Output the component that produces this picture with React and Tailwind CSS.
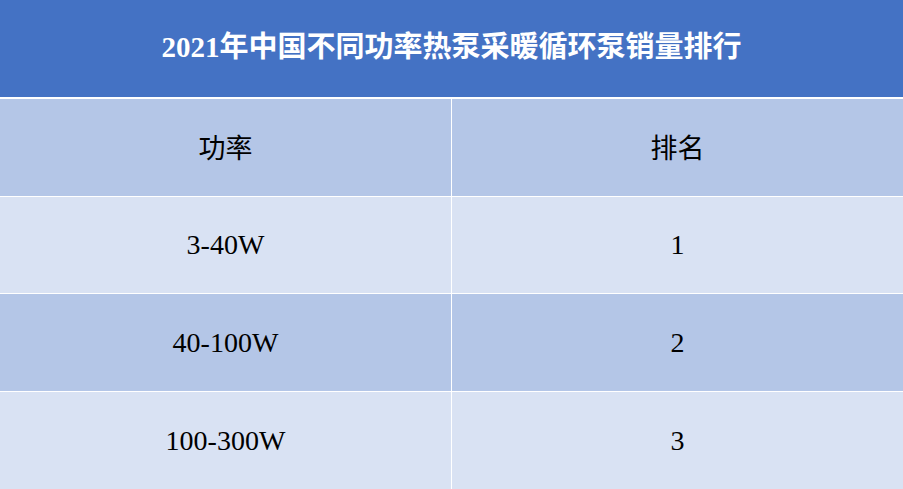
export default function App() {
  const rows = [
    ["3-40W", "1", "bg-[#D9E2F3]"],
    ["40-100W", "2", "bg-[#B4C6E7]"],
    ["100-300W", "3", "bg-[#D9E2F3]"],
  ];
  const font = { fontFamily: '"Liberation Serif", "Noto Sans CJK SC", serif' };
  return (
    <div className="w-[903px] h-[489px] bg-white flex flex-col overflow-hidden" style={font}>
      <div className="h-[97px] bg-[#4472C4] flex items-center justify-center text-white font-bold text-[29px] leading-none pb-px">
        2021年中国不同功率热泵采暖循环泵销量排行
      </div>
      <div className="h-[2px] bg-white" />
      <div className="grid grid-cols-2 gap-x-px h-[97px]">
        <div className="bg-[#B4C6E7] flex items-center justify-center text-black text-[27px] pt-[4px]">功率</div>
        <div className="bg-[#B4C6E7] flex items-center justify-center text-black text-[27px] pt-[4px]">排名</div>
      </div>
      {rows.map(([a, b, bg]) => (
        <div key={a} className="grid grid-cols-2 gap-x-px h-[97px] mt-px">
          <div className={`${bg} flex items-center justify-center text-black text-[28px]`}>{a}</div>
          <div className={`${bg} flex items-center justify-center text-black text-[28px]`}>{b}</div>
        </div>
      ))}
    </div>
  );
}
